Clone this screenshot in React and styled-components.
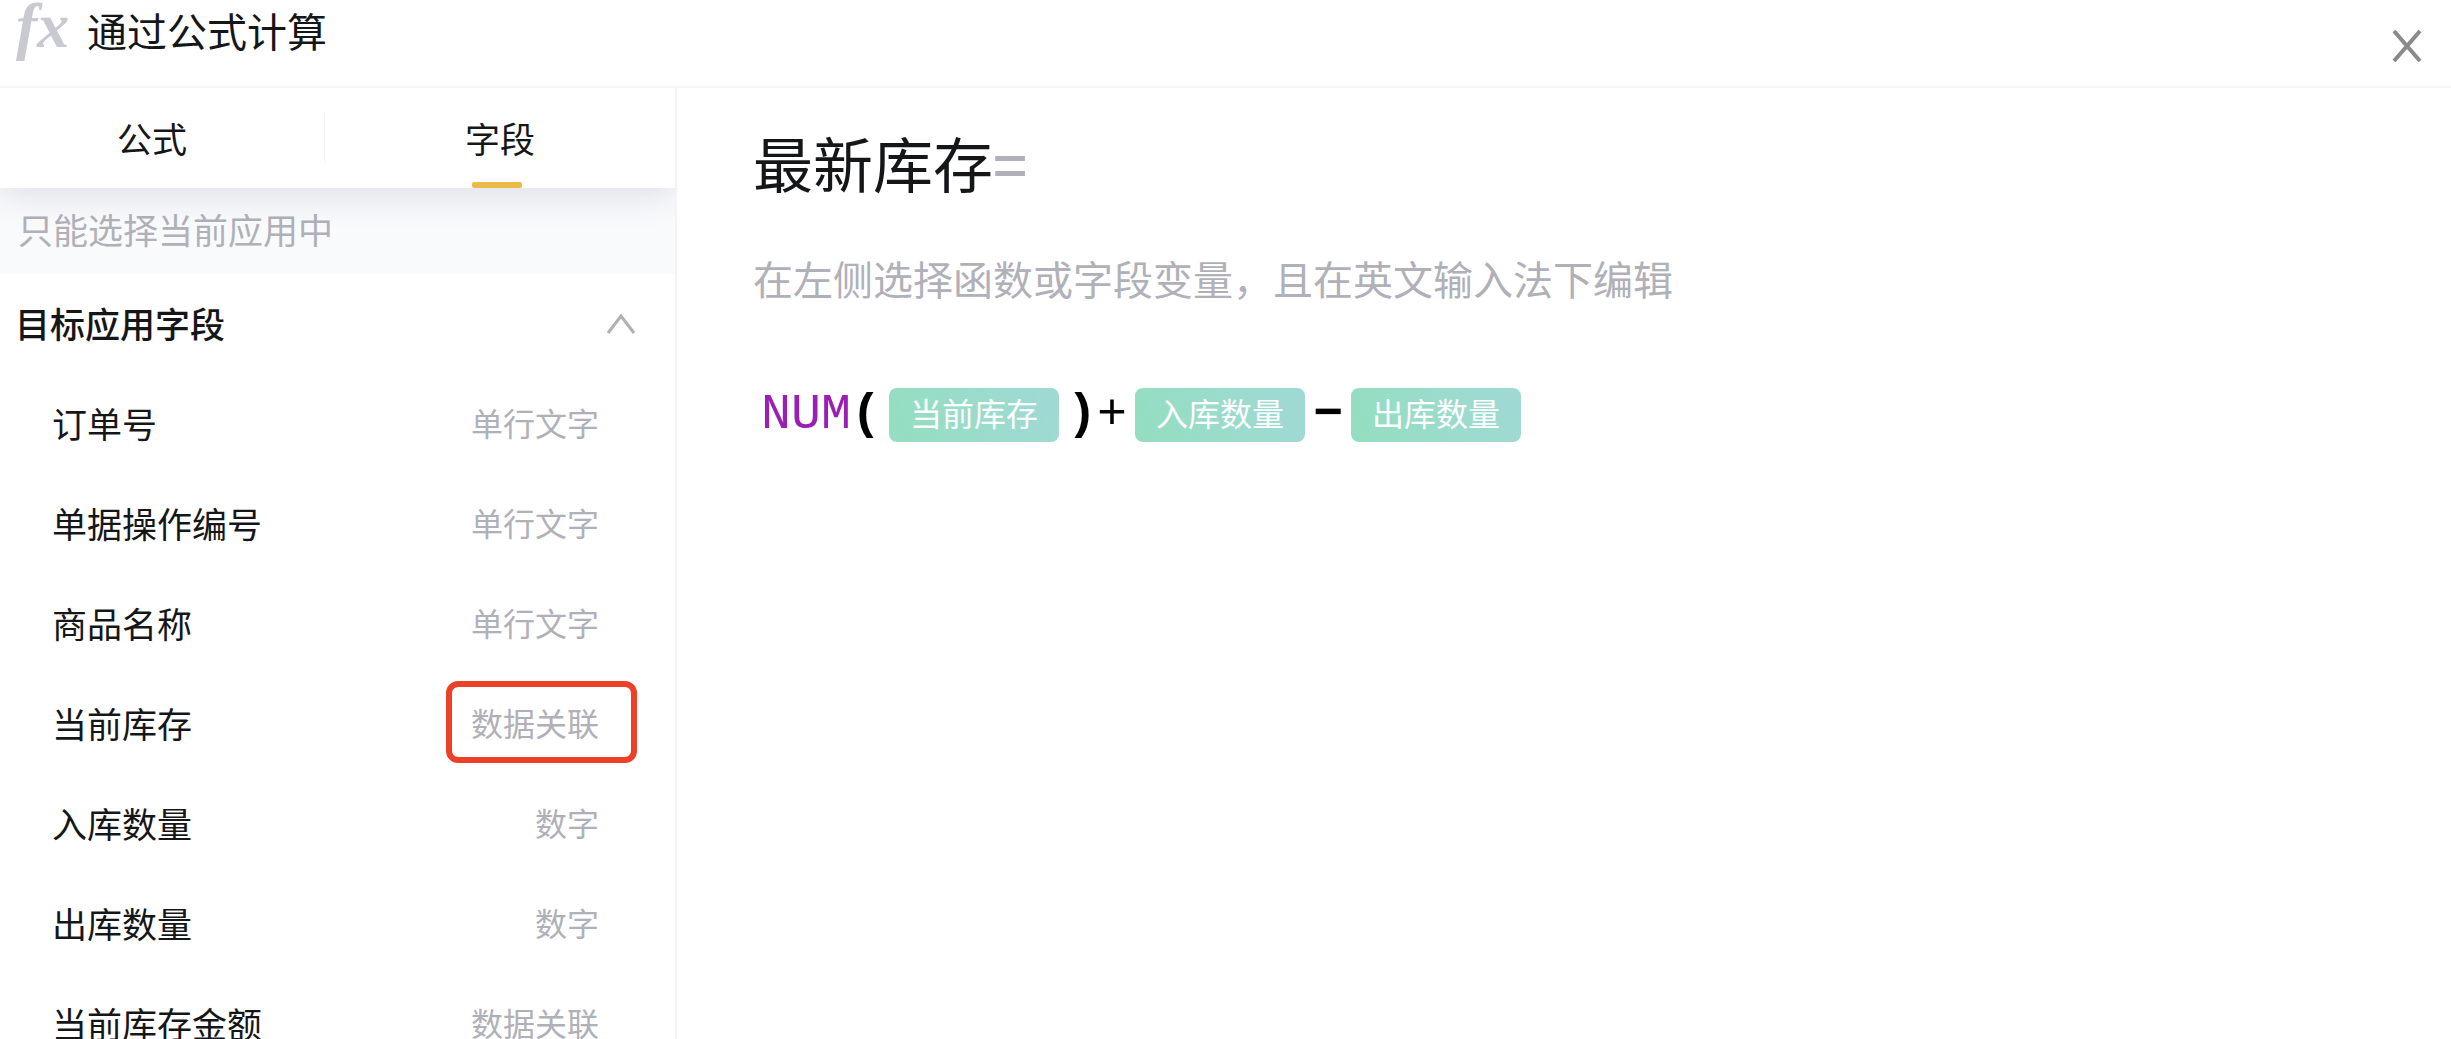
import React, { useState } from 'react';
import styled, { createGlobalStyle } from 'styled-components';

const GlobalStyle = createGlobalStyle`
  * {
    box-sizing: border-box;
  }

  body {
    margin: 0;
    background: #fff;
    color: #151618;
    font-family: 'Noto Sans CJK SC', sans-serif;
  }

  button {
    border: none;
    background: none;
    padding: 0;
    color: inherit;
    font: inherit;
    cursor: pointer;
  }
`;

const Dialog = styled.div`
  display: flex;
  flex-direction: column;
  height: 100vh;
  overflow: hidden;
`;

const Header = styled.header`
  display: flex;
  flex: none;
  align-items: flex-start;
  height: 88px;
  padding: 0 28px 0 16px;
  border-bottom: 2px solid #f4f4f5;
`;

const FxMark = styled.span`
  width: 71px;
  color: #c9c9d2;
  font: italic bold 64px/52px 'Liberation Serif', serif;
`;

const Title = styled.h1`
  margin: 0;
  font-size: 40px;
  font-weight: 400;
  line-height: 60px;
`;

const CloseButton = styled.button`
  display: flex;
  margin-left: auto;
  padding-top: 30px;
`;

const Body = styled.div`
  display: flex;
  flex: 1;
  min-height: 0;
`;

const Sidebar = styled.aside`
  display: flex;
  flex: none;
  flex-direction: column;
  width: 677px;
  border-right: 2px solid #f4f4f5;
`;

const Tabs = styled.div`
  display: flex;
  flex: none;
  align-items: center;
  height: 100px;
  z-index: 1;
  background: #fff;
  box-shadow: 0 8px 32px rgba(40, 44, 80, 0.12);
  clip-path: inset(0 0 -40px 0);
`;

const Divider = styled.span`
  width: 1px;
  height: 50px;
  background: #f4f4f5;
`;

const Tab = styled.button`
  position: relative;
  flex: ${(p) => (p.$wide ? '1' : '0 0 324px')};
  height: 100px;
  padding: ${(p) => (p.$wide ? '0 0 2px' : '0 20px 2px 0')};
  font-size: 35px;

  &::after {
    content: '';
    display: ${(p) => (p.$active ? 'block' : 'none')};
    position: absolute;
    bottom: 0;
    left: calc(50% - 28px);
    width: 50px;
    height: 6px;
    border-radius: 2px;
    background: #ebbb47;
  }
`;

const Hint = styled.p`
  flex: none;
  margin: 0;
  padding: 0 18px 4px;
  background: #f9fafc;
  color: #b0b0b8;
  font-size: 35px;
  line-height: 82px;
`;

const GroupHeader = styled.button`
  display: flex;
  flex: none;
  align-items: center;
  justify-content: space-between;
  height: 100px;
  padding: 0 40px 0 15px;
  font-size: 35px;
  font-weight: 500;
`;

const GroupName = styled.span`
  padding-bottom: 4px;
`;

const FieldList = styled.ul`
  flex: 1;
  min-height: 0;
  margin: 0;
  padding: 0;
  overflow-y: auto;
  list-style: none;
  scrollbar-width: none;
`;

const FieldRow = styled.button`
  display: flex;
  align-items: center;
  justify-content: space-between;
  width: 100%;
  height: 100px;
  padding: 0 76px 4px 52px;
  font-size: 35px;
`;

const FieldType = styled.span`
  position: relative;
  color: #b0b0b8;
  font-size: 32px;
  line-height: 48px;

  &::after {
    content: '';
    display: ${(p) => (p.$marked ? 'block' : 'none')};
    position: absolute;
    inset: -17px -38px -17px -25px;
    border: 6px solid #ec4126;
    border-radius: 12px;
  }
`;

const Editor = styled.main`
  flex: 1;
  padding: 32px 76px;
`;

const Target = styled.h2`
  margin: 0;
  font-size: 60px;
  font-weight: 400;
  line-height: 84px;
`;

const Equals = styled.span`
  color: #b0b0b8;
  font-weight: 500;
`;

const Tip = styled.p`
  margin: 44px 0 0;
  color: #b0b0b8;
  font-size: 40px;
  line-height: 60px;
`;

const Formula = styled.div`
  display: flex;
  align-items: center;
  height: 54px;
  margin-top: 80px;
  padding-left: 8px;
  color: #000;
  font: 50px/54px 'Liberation Mono', monospace;
`;

const FunctionName = styled.span`
  color: #9b1fb5;
`;

const Operator = styled.span`
  font-weight: ${(p) => (p.$bold ? 700 : 400)};
`;

const Chip = styled.span`
  flex: none;
  width: 170px;
  height: 54px;
  margin: 0 8px;
  border-radius: 8px;
  background: linear-gradient(70deg, #94dec0, #a0d9d5);
  color: #fff;
  font: 32px/48px 'Noto Sans CJK SC', sans-serif;
  text-align: center;
`;

const fields = [
  { name: '订单号', type: '单行文字' },
  { name: '单据操作编号', type: '单行文字' },
  { name: '商品名称', type: '单行文字' },
  { name: '当前库存', type: '数据关联', marked: true },
  { name: '入库数量', type: '数字' },
  { name: '出库数量', type: '数字' },
  { name: '当前库存金额', type: '数据关联' },
];

const App = () => {
  const [tab, setTab] = useState('field');
  const [open, setOpen] = useState(true);

  return (
    <Dialog>
      <GlobalStyle />
      <Header>
        <FxMark>fx</FxMark>
        <Title>通过公式计算</Title>
        <CloseButton type="button" aria-label="关闭">
          <svg width="32" height="32" viewBox="0 0 32 32" fill="none" stroke="#8a8a8a" strokeWidth="4">
            <path d="M3 1L29 31M29 1L3 31" />
          </svg>
        </CloseButton>
      </Header>
      <Body>
        <Sidebar>
          <Tabs>
            <Tab type="button" $active={tab === 'formula'} onClick={() => setTab('formula')}>公式</Tab>
            <Divider />
            <Tab type="button" $wide $active={tab === 'field'} onClick={() => setTab('field')}>字段</Tab>
          </Tabs>
          <Hint>只能选择当前应用中</Hint>
          <GroupHeader type="button" aria-expanded={open} onClick={() => setOpen(!open)}>
            <GroupName>目标应用字段</GroupName>
            <svg width="28" height="20" viewBox="0 0 28 20" fill="none" stroke="#b0b0b8" strokeWidth="3">
              <path d={open ? 'M1 19L14 2L27 19' : 'M1 1L14 18L27 1'} />
            </svg>
          </GroupHeader>
          {open && (
            <FieldList>
              {fields.map((field) => (
                <li key={field.name}>
                  <FieldRow type="button">
                    {field.name}
                    <FieldType $marked={field.marked}>{field.type}</FieldType>
                  </FieldRow>
                </li>
              ))}
            </FieldList>
          )}
        </Sidebar>
        <Editor>
          <Target>最新库存<Equals>=</Equals></Target>
          <Tip>在左侧选择函数或字段变量，且在英文输入法下编辑</Tip>
          <Formula>
            <FunctionName>NUM</FunctionName>
            <Operator $bold>(</Operator>
            <Chip>当前库存</Chip>
            <Operator $bold>)</Operator>
            <Operator>+</Operator>
            <Chip>入库数量</Chip>
            <Operator $bold>−</Operator>
            <Chip>出库数量</Chip>
          </Formula>
        </Editor>
      </Body>
    </Dialog>
  );
};

export default App;
